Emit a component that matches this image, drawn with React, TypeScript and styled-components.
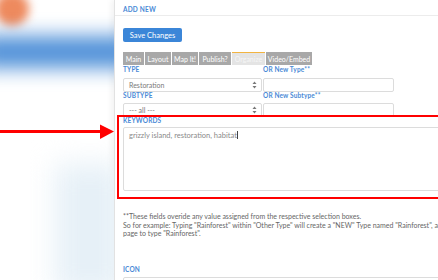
import React from 'react';
import styled, { createGlobalStyle } from 'styled-components';

const Global = createGlobalStyle`
  html, body { margin: 0; padding: 0; background: #fff; }
  body { width: 438px; height: 280px; overflow: hidden; font-family: Lato, "Open Sans", sans-serif; }
  * { box-sizing: border-box; }
`;

const Page = styled.div`
  position: relative;
  display: flex;
  width: 438px;
  height: 280px;
  overflow: hidden;
  background: #fff;
`;

const Backdrop = styled.div`
  flex: 0 0 114px;
  display: flex;
  flex-direction: column;
  overflow: hidden;
  background: #fff;
`;

const OrangeBlob = styled.div`
  flex: none;
  width: 34px;
  height: 34px;
  border-radius: 50%;
  margin: -8px 0 0 -5px;
  background: #ee8a5e;
  filter: blur(5px);
`;

const BlueBand = styled.div`
  flex: none;
  height: 32px;
  margin: 10px -20px 0 -20px;
  background: #4f90d8;
  filter: blur(10px);
`;

const Haze = styled.div`
  flex: none;
  height: 130px;
  margin: 96px -10px 0 55px;
  background: #e6f0f7;
  filter: blur(14px);
`;

const Arrow = styled.svg`
  position: absolute;
  left: 0;
  top: 122px;
`;

const Panel = styled.div`
  flex: 0 0 360px;
  background: #fff;
  border-left: 1px solid #e2e2e2;
  box-shadow: -3px 0 6px rgba(0, 0, 0, 0.05);
  display: flex;
  flex-direction: column;
`;

const Header = styled.div`
  flex: none;
  height: 16px;
  padding: 3px 8px 0;
  display: flex;
  align-items: center;
  border-bottom: 1px solid #ececec;
  font-size: 6.5px;
  font-weight: 700;
  color: #4a8ad6;
  letter-spacing: 0.2px;
`;

const Body = styled.div`
  flex: none;
  padding: 0 8px;
  display: flex;
  flex-direction: column;
  align-items: flex-start;
`;

const SaveButton = styled.button`
  flex: none;
  margin-top: 12px;
  width: 59px;
  height: 14px;
  padding: 0;
  border: none;
  border-radius: 2px;
  background: #3b86d8;
  color: #fff;
  font-family: inherit;
  font-size: 7.5px;
`;

const Tabs = styled.div`
  flex: none;
  margin-top: 10px;
  display: flex;
  gap: 1px;
  height: 13px;
`;

const Tab = styled.div<{ $w: number; $active?: boolean }>`
  width: ${(p) => p.$w}px;
  display: flex;
  align-items: center;
  justify-content: center;
  background: ${(p) => (p.$active ? '#e4e4e4' : '#a8a8a8')};
  border-top: 1px solid ${(p) => (p.$active ? '#f2b441' : '#a8a8a8')};
  color: ${(p) => (p.$active ? '#f6f6f6' : '#fff')};
  font-size: 7px;
  white-space: nowrap;
`;

const Grid = styled.div`
  flex: none;
  margin-top: 1px;
  display: grid;
  grid-template-columns: 139px 131px;
  column-gap: 1px;
`;

const Label = styled.div`
  flex: none;
  height: 8px;
  line-height: 8px;
  font-size: 6.5px;
  font-weight: 700;
  color: #4a8ad6;
  letter-spacing: 0.15px;
  white-space: nowrap;
`;

const Field = styled.div<{ $gap: number }>`
  display: flex;
  flex-direction: column;
  gap: ${(p) => p.$gap}px;
`;

const Box = styled.div`
  flex: none;
  height: 14px;
  border: 1px solid #dcdcdc;
  border-radius: 2px;
  background: #fff;
  display: flex;
  align-items: center;
  justify-content: space-between;
  padding: 0 4px 0 5px;
  font-size: 7px;
  color: #7a7a7a;
`;

const Highlight = styled.div`
  flex: none;
  margin: -2px 0 0 -6px;
  width: 340px;
  border: 2px solid #ff0000;
  padding: 0 0 6px 4px;
  display: flex;
  flex-direction: column;
  gap: 2px;
`;

const TextArea = styled.div`
  flex: none;
  height: 64px;
  width: 330px;
  border: 1px solid #dcdcdc;
  border-radius: 2px;
  padding: 3px 5px;
  font-size: 7.5px;
  line-height: 9px;
  color: #8a8a8a;
`;

const Caret = styled.span`
  display: inline-block;
  width: 1px;
  height: 8px;
  background: #444;
  vertical-align: -1px;
`;

const Note = styled.div`
  flex: none;
  margin-top: 13px;
  font-size: 7px;
  line-height: 8.5px;
  color: #666;
  white-space: nowrap;
`;

const IconField = styled(Field)`
  flex: none;
  margin-top: 28px;
`;

const Wide = styled(Box)`
  width: 330px;
`;

const SelectArrows = () => (
  <svg width="5" height="8" viewBox="0 0 5 8">
    <path d="M2.5 0.5 L4.5 3 L0.5 3 Z" fill="#777" />
    <path d="M2.5 7.5 L4.5 5 L0.5 5 Z" fill="#777" />
  </svg>
);

export default function App() {
  return (
    <Page>
      <Global />
      <Backdrop>
        <OrangeBlob />
        <BlueBand />
        <Haze />
      </Backdrop>
      <Arrow width="116" height="20" viewBox="0 0 116 20">
        <rect x="0" y="8" width="102" height="3" fill="#ff0000" />
        <path d="M100 2.5 L114 9.5 L100 17 Z" fill="#ff0000" />
      </Arrow>
      <Panel>
        <Header>ADD NEW</Header>
        <Body>
          <SaveButton>Save Changes</SaveButton>
          <Tabs>
            <Tab $w={21}>Main</Tab>
            <Tab $w={26}>Layout</Tab>
            <Tab $w={26}>Map It!</Tab>
            <Tab $w={32}>Publish?</Tab>
            <Tab $w={33} $active>Organize</Tab>
            <Tab $w={46}>Video/Embed</Tab>
          </Tabs>
          <Grid>
            <Field $gap={4}>
              <Label>TYPE</Label>
              <Box>
                <span>Restoration</span>
                <SelectArrows />
              </Box>
            </Field>
            <Field $gap={4}>
              <Label>OR New Type**</Label>
              <Box />
            </Field>
            <Field $gap={3}>
              <Label>SUBTYPE</Label>
              <Box>
                <span>--- all ---</span>
                <SelectArrows />
              </Box>
            </Field>
            <Field $gap={3}>
              <Label>OR New Subtype**</Label>
              <Box />
            </Field>
          </Grid>
          <Highlight>
            <Label>KEYWORDS</Label>
            <TextArea>
              grizzly island, restoration, habitat<Caret />
            </TextArea>
          </Highlight>
          <Note>
            **These fields overide any value assigned from the respective selection boxes.
            <br />
            So for example: Typing "Rainforest" within "Other Type" will create a "NEW" Type named "Rainforest", and assign this
            <br />
            page to type "Rainforest".
          </Note>
          <IconField $gap={3}>
            <Label>ICON</Label>
            <Wide />
          </IconField>
        </Body>
      </Panel>
    </Page>
  );
}
